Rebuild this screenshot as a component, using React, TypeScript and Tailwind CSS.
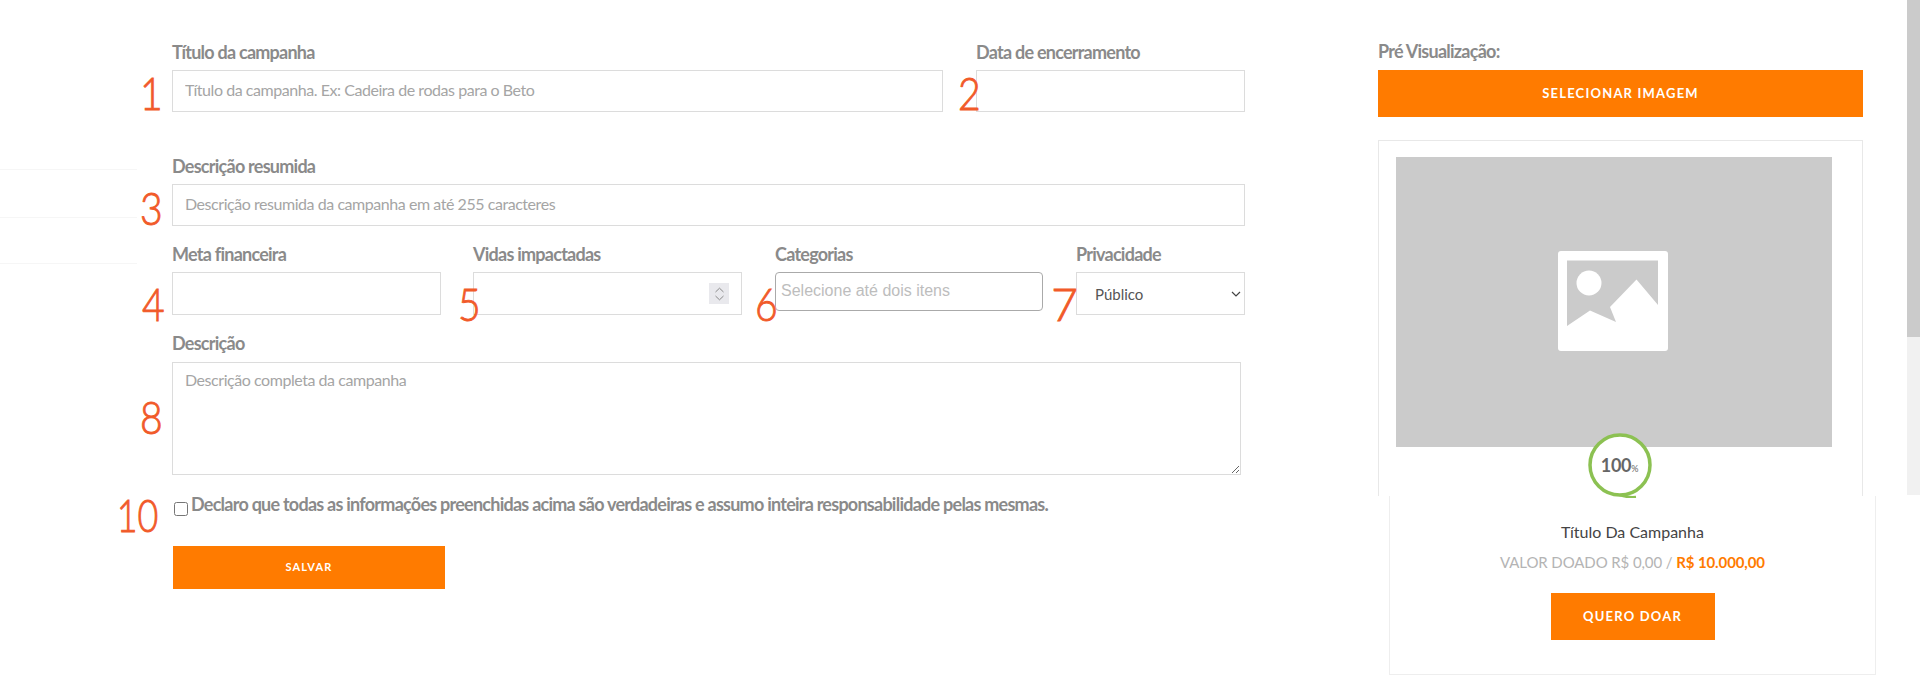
import React from "react";

const lato = "font-['Lato',sans-serif]";

const Label: React.FC<{ children: React.ReactNode }> = ({ children }) => (
  <label className="block h-[22px] text-[18px] leading-[22px] font-bold tracking-[-0.75px] text-[#8a8a8a]">
    {children}
  </label>
);

const Marker: React.FC<{ value: string; className: string }> = ({ value, className }) => (
  <span
    className={`absolute text-[46px] leading-[46px] font-light text-[#f15a29] origin-right [-webkit-text-stroke:0.9px_#f15a29] ${className}`}
  >
    {value}
  </span>
);

const inputClass =
  "block w-full h-[42px] border border-[#dcdcdc] bg-white px-[12px] pb-[3px] text-[16px] tracking-[-0.45px] font-normal outline-none placeholder:text-[#a5a5a5]";

export default function App() {
  return (
    <div className={`relative flex h-[682px] w-[1920px] overflow-hidden bg-white ${lato}`}>
      {/* Faint rows of the hidden sidebar */}
      <div className="absolute left-0 top-[169px] h-px w-[137px] bg-[#f6f6f6]" />
      <div className="absolute left-0 top-[217px] h-px w-[137px] bg-[#f6f6f6]" />
      <div className="absolute left-0 top-[263px] h-px w-[137px] bg-[#f6f6f6]" />

      {/* Form */}
      <div className="relative w-[1378px] shrink-0 pl-[172px] pt-[41px]">
        <div className="w-[1073px]">
          <div className="flex gap-[33px]">
            <div className="w-[771px]">
              <Label>Título da campanha</Label>
              <input className={`${inputClass} mt-[7px]`} placeholder="Título da campanha. Ex: Cadeira de rodas para o Beto" />
            </div>
            <div className="w-[269px]">
              <Label>Data de encerramento</Label>
              <input className={`${inputClass} mt-[7px]`} />
            </div>
          </div>

          <div className="mt-[43px]">
            <Label>Descrição resumida</Label>
            <input className={`${inputClass} mt-[7px]`} placeholder="Descrição resumida da campanha em até 255 caracteres" />
          </div>

          <div className="mt-[17px] flex">
            <div className="w-[269px]">
              <Label>Meta financeira</Label>
              <input className={`${inputClass} mt-[7px] !h-[43px]`} />
            </div>
            <div className="ml-[32px] w-[269px]">
              <Label>Vidas impactadas</Label>
              <div className="relative mt-[7px]">
                <input className={`${inputClass} !h-[43px]`} />
                <div className="absolute right-[13px] top-[11px] flex h-[21px] w-[20px] flex-col items-center justify-center gap-[2px] bg-[#e9e9ed]">
                  <svg width="11" height="6" viewBox="0 0 11 6" fill="none" stroke="#8a8a8a" strokeWidth="1">
                    <path d="M1.5 5 5.500 1.200 9.500 5" />
                  </svg>
                  <svg width="11" height="6" viewBox="0 0 11 6" fill="none" stroke="#8a8a8a" strokeWidth="1">
                    <path d="M1.500 1 5.500 4.800 9.500 1" />
                  </svg>
                </div>
              </div>
            </div>
            <div className="ml-[33px] w-[268px]">
              <Label>Categorias</Label>
              <input
                className="mt-[7px] block h-[39px] w-full rounded-[4px] border border-[#aaaaaa] bg-white px-[5px] pb-[2px] font-['Liberation_Sans',sans-serif] text-[16px] outline-none placeholder:text-[#bdbdbd]"
                placeholder="Selecione até dois itens"
              />
            </div>
            <div className="ml-[33px] w-[169px]">
              <Label>Privacidade</Label>
              <div className="relative mt-[7px]">
                <select className="block h-[43px] w-full appearance-none border border-[#dcdcdc] bg-white pl-[18px] pt-px text-[15px] text-[#555] outline-none">
                  <option>Público</option>
                </select>
                <svg
                  width="10"
                  height="6"
                  viewBox="0 0 10 6"
                  fill="none"
                  stroke="#444"
                  strokeWidth="1.200"
                  className="pointer-events-none absolute right-[4px] top-[19px]"
                >
                  <path d="M1 1 5 5 9 1" />
                </svg>
              </div>
            </div>
          </div>

          <div className="mt-[17px]">
            <Label>Descrição</Label>
            <textarea
              className="mt-[8px] block h-[113px] w-[1069px] border border-[#dcdcdc] bg-white px-[12px] py-[5px] text-[16px] tracking-[-0.45px] outline-none placeholder:text-[#a5a5a5]"
              placeholder="Descrição completa da campanha"
            />
          </div>

          <div className="mt-[19px] flex items-start">
            <input type="checkbox" className="ml-[2px] mt-[8px] h-[14px] w-[14px] shrink-0" />
            <span className="-mt-px ml-[3px] text-[18px] leading-[22px] font-bold tracking-[-0.75px] text-[#8a8a8a]">
              Declaro que todas as informações preenchidas acima são verdadeiras e assumo inteira responsabilidade pelas mesmas.
            </span>
          </div>

          <button className="ml-px mt-[30px] block h-[43px] w-[272px] bg-[#ff7b00] text-[11px] font-bold tracking-[1.2px] text-white">
            SALVAR
          </button>
        </div>

        <Marker value="1" className="right-[1215px] top-[70px] scale-x-[0.85]" />
        <Marker value="2" className="right-[397px] top-[70px] scale-x-[0.85]" />
        <Marker value="3" className="right-[1215px] top-[185px] scale-x-[0.85]" />
        <Marker value="4" className="right-[1213px] top-[281px] scale-x-[0.85]" />
        <Marker value="5" className="right-[897px] top-[281px] scale-x-[0.85]" />
        <Marker value="6" className="right-[600px] top-[281px] scale-x-[0.85]" />
        <Marker value="7" className="right-[300px] top-[281px]" />
        <Marker value="8" className="right-[1215px] top-[394px] scale-x-[0.85]" />
        <Marker value="10" className="right-[1220px] top-[492px] scale-x-[0.78]" />
      </div>

      {/* Preview */}
      <div className="relative w-[485px] shrink-0 pt-[40px]">
        <Label>Pré Visualização:</Label>
        <button className="mt-[8px] block h-[47px] w-full bg-[#ff7b00] text-[13px] font-bold tracking-[1.2px] text-white">
          SELECIONAR IMAGEM
        </button>

        <div className="relative mt-[23px] h-[356px] border-x border-t border-[#e8e8e8] pl-[17px] pt-[16px]">
          <div className="flex h-[290px] w-[436px] items-center justify-center bg-[#cbcbcb]">
            <svg width="110" height="100" viewBox="0 0 110 100" className="mb-[2px] mr-[3px]">
              <rect width="110" height="100" rx="3" fill="#ffffff" />
              <path d="M9 9.500H100V54L78.500 28.500 52 56 58 71 32 59.500 9 75Z" fill="#cbcbcb" />
              <circle cx="31" cy="32" r="12.500" fill="#ffffff" />
            </svg>
          </div>
          <div className="absolute left-[208px] top-[291px] flex h-[66px] w-[68px] items-center justify-center">
            <svg width="68" height="66" viewBox="0 0 68 66" className="absolute inset-0">
              <circle cx="33" cy="33" r="30" fill="#ffffff" stroke="#8cc152" strokeWidth="3.500" />
              <path d="M33 63c5 2 10 2.500 16 2" fill="none" stroke="#8cc152" strokeWidth="2.500" />
            </svg>
            <span className="relative mr-[3px] text-[18px] font-bold tracking-[-0.3px] text-[#666]">
              100<span className="text-[9px] font-normal">%</span>
            </span>
          </div>
        </div>

        <div className="ml-[11px] flex h-[179px] w-[487px] flex-col items-center border-x border-b border-[#eeeeee] bg-white pt-[26px]">
          <div className="text-[16px] leading-[20px] text-[#444]">Título Da Campanha</div>
          <div className="mt-[10px] text-[15px] leading-[20px] tracking-[-0.1px] text-[#b4b4b4]">
            VALOR DOADO R$ 0,00 / <span className="font-bold text-[#ff7b00]">R$ 10.000,00</span>
          </div>
          <button className="mt-[21px] h-[47px] w-[164px] bg-[#ff7b00] text-[13px] font-bold tracking-[1.2px] text-white">
            QUERO DOAR
          </button>
        </div>
      </div>

      {/* Scrollbar */}
      <div className="ml-[44px] flex h-[495px] w-[13px] shrink-0 flex-col bg-[#f1f1f1]">
        <div className="h-[337px] bg-[#cbcbcb]" />
      </div>
    </div>
  );
}
